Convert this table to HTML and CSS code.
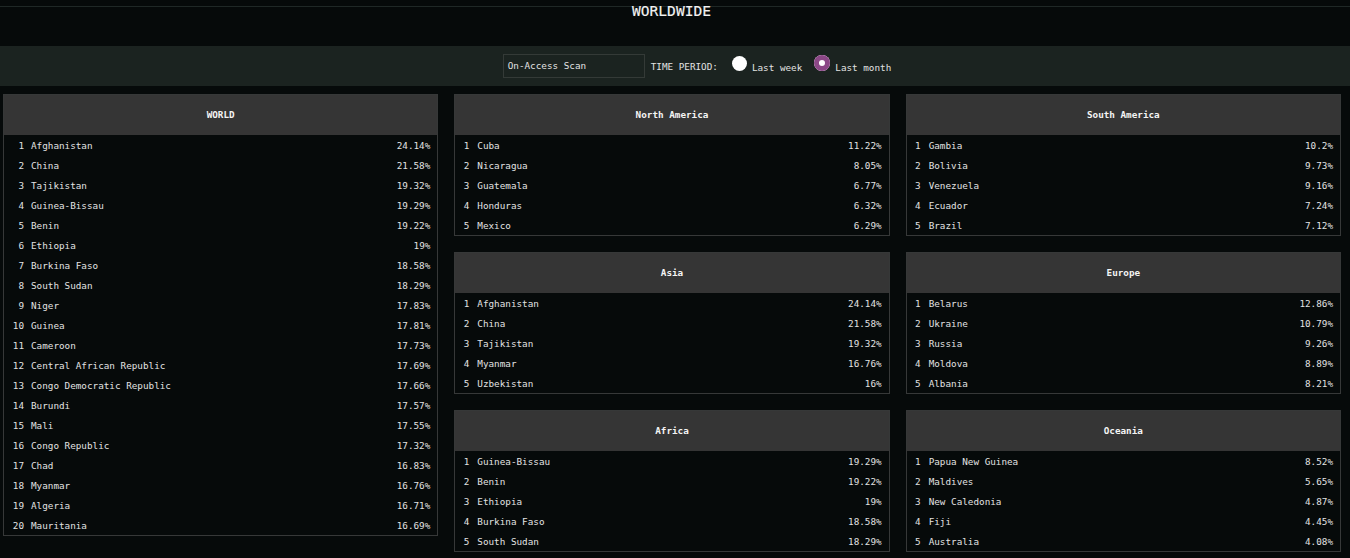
FILE: index.html
```html
<!DOCTYPE html>
<html lang="en">
<head>
  <meta charset="UTF-8" />
  <meta name="viewport" content="width=device-width, initial-scale=1.0" />
  <title>Worldwide</title>
  <link rel="stylesheet" href="styles.css">
</head>
<body>
  <header class="top">
    <div class="top-line">
      <h1 class="title">WORLDWIDE</h1>
    </div>
  </header>

  <div class="filters">
    <div class="scan-box">On-Access Scan</div>
    <span class="period-label">TIME PERIOD:</span>
    <label class="radio"><span class="dot"></span>Last week</label>
    <label class="radio"><span class="dot checked"></span>Last month</label>
  </div>

  <main class="board">
    <div class="column">
      <section class="card">
        <h3 class="card-title">WORLD</h3>
        <ol class="rank-list wide">
          <li><span class="num">1</span><span class="name">Afghanistan</span><span class="pct">24.14%</span></li>
          <li><span class="num">2</span><span class="name">China</span><span class="pct">21.58%</span></li>
          <li><span class="num">3</span><span class="name">Tajikistan</span><span class="pct">19.32%</span></li>
          <li><span class="num">4</span><span class="name">Guinea-Bissau</span><span class="pct">19.29%</span></li>
          <li><span class="num">5</span><span class="name">Benin</span><span class="pct">19.22%</span></li>
          <li><span class="num">6</span><span class="name">Ethiopia</span><span class="pct">19%</span></li>
          <li><span class="num">7</span><span class="name">Burkina Faso</span><span class="pct">18.58%</span></li>
          <li><span class="num">8</span><span class="name">South Sudan</span><span class="pct">18.29%</span></li>
          <li><span class="num">9</span><span class="name">Niger</span><span class="pct">17.83%</span></li>
          <li><span class="num">10</span><span class="name">Guinea</span><span class="pct">17.81%</span></li>
          <li><span class="num">11</span><span class="name">Cameroon</span><span class="pct">17.73%</span></li>
          <li><span class="num">12</span><span class="name">Central African Republic</span><span class="pct">17.69%</span></li>
          <li><span class="num">13</span><span class="name">Congo Democratic Republic</span><span class="pct">17.66%</span></li>
          <li><span class="num">14</span><span class="name">Burundi</span><span class="pct">17.57%</span></li>
          <li><span class="num">15</span><span class="name">Mali</span><span class="pct">17.55%</span></li>
          <li><span class="num">16</span><span class="name">Congo Republic</span><span class="pct">17.32%</span></li>
          <li><span class="num">17</span><span class="name">Chad</span><span class="pct">16.83%</span></li>
          <li><span class="num">18</span><span class="name">Myanmar</span><span class="pct">16.76%</span></li>
          <li><span class="num">19</span><span class="name">Algeria</span><span class="pct">16.71%</span></li>
          <li><span class="num">20</span><span class="name">Mauritania</span><span class="pct">16.69%</span></li>
        </ol>
      </section>
    </div>

    <div class="column">
      <section class="card">
        <h3 class="card-title">North America</h3>
        <ol class="rank-list">
          <li><span class="num">1</span><span class="name">Cuba</span><span class="pct">11.22%</span></li>
          <li><span class="num">2</span><span class="name">Nicaragua</span><span class="pct">8.05%</span></li>
          <li><span class="num">3</span><span class="name">Guatemala</span><span class="pct">6.77%</span></li>
          <li><span class="num">4</span><span class="name">Honduras</span><span class="pct">6.32%</span></li>
          <li><span class="num">5</span><span class="name">Mexico</span><span class="pct">6.29%</span></li>
        </ol>
      </section>
      <section class="card">
        <h3 class="card-title">Asia</h3>
        <ol class="rank-list">
          <li><span class="num">1</span><span class="name">Afghanistan</span><span class="pct">24.14%</span></li>
          <li><span class="num">2</span><span class="name">China</span><span class="pct">21.58%</span></li>
          <li><span class="num">3</span><span class="name">Tajikistan</span><span class="pct">19.32%</span></li>
          <li><span class="num">4</span><span class="name">Myanmar</span><span class="pct">16.76%</span></li>
          <li><span class="num">5</span><span class="name">Uzbekistan</span><span class="pct">16%</span></li>
        </ol>
      </section>
      <section class="card">
        <h3 class="card-title">Africa</h3>
        <ol class="rank-list">
          <li><span class="num">1</span><span class="name">Guinea-Bissau</span><span class="pct">19.29%</span></li>
          <li><span class="num">2</span><span class="name">Benin</span><span class="pct">19.22%</span></li>
          <li><span class="num">3</span><span class="name">Ethiopia</span><span class="pct">19%</span></li>
          <li><span class="num">4</span><span class="name">Burkina Faso</span><span class="pct">18.58%</span></li>
          <li><span class="num">5</span><span class="name">South Sudan</span><span class="pct">18.29%</span></li>
        </ol>
      </section>
    </div>

    <div class="column">
      <section class="card">
        <h3 class="card-title">South America</h3>
        <ol class="rank-list">
          <li><span class="num">1</span><span class="name">Gambia</span><span class="pct">10.2%</span></li>
          <li><span class="num">2</span><span class="name">Bolivia</span><span class="pct">9.73%</span></li>
          <li><span class="num">3</span><span class="name">Venezuela</span><span class="pct">9.16%</span></li>
          <li><span class="num">4</span><span class="name">Ecuador</span><span class="pct">7.24%</span></li>
          <li><span class="num">5</span><span class="name">Brazil</span><span class="pct">7.12%</span></li>
        </ol>
      </section>
      <section class="card">
        <h3 class="card-title">Europe</h3>
        <ol class="rank-list">
          <li><span class="num">1</span><span class="name">Belarus</span><span class="pct">12.86%</span></li>
          <li><span class="num">2</span><span class="name">Ukraine</span><span class="pct">10.79%</span></li>
          <li><span class="num">3</span><span class="name">Russia</span><span class="pct">9.26%</span></li>
          <li><span class="num">4</span><span class="name">Moldova</span><span class="pct">8.89%</span></li>
          <li><span class="num">5</span><span class="name">Albania</span><span class="pct">8.21%</span></li>
        </ol>
      </section>
      <section class="card">
        <h3 class="card-title">Oceania</h3>
        <ol class="rank-list">
          <li><span class="num">1</span><span class="name">Papua New Guinea</span><span class="pct">8.52%</span></li>
          <li><span class="num">2</span><span class="name">Maldives</span><span class="pct">5.65%</span></li>
          <li><span class="num">3</span><span class="name">New Caledonia</span><span class="pct">4.87%</span></li>
          <li><span class="num">4</span><span class="name">Fiji</span><span class="pct">4.45%</span></li>
          <li><span class="num">5</span><span class="name">Australia</span><span class="pct">4.08%</span></li>
        </ol>
      </section>
    </div>
  </main>
</body>
</html>
```

FILE: styles.css
```css
/* Base */
body {
  margin: 0;
  background-color: #060a0a;
  color: #e2e2e2;
  font-family: "DejaVu Sans Mono", "Liberation Mono", monospace;
  font-size: 9.3px;
}

/* Header */
.top {
  height: 46px;
  padding-top: 6px;
  box-sizing: border-box;
}

.top-line {
  border-top: 1px solid #1f2826;
  height: 39px;
  text-align: center;
}

.title {
  margin: -5px 0 0;
  padding-right: 7px;
  font-size: 14.6px;
  font-weight: normal;
  line-height: 17px;
  color: #f2f2f2;
  -webkit-text-stroke: 0.15px #f2f2f2;
}

/* Filters bar */
.filters {
  height: 40px;
  background-color: #1b2320;
  display: flex;
  align-items: center;
  justify-content: center;
  padding-left: 44px;
}

.scan-box {
  width: 142px;
  height: 24px;
  box-sizing: border-box;
  border: 1px solid #343a37;
  padding-left: 4px;
  line-height: 22px;
  margin-right: 6px;
}

.period-label {
  margin-right: 14px;
  line-height: 24px;
  padding-top: 2px;
}

.radio {
  display: flex;
  align-items: center;
  margin-right: 12px;
  padding-top: 2px;
}

.radio:last-child {
  margin-right: 0;
}

.dot {
  width: 15px;
  height: 15px;
  border-radius: 50%;
  background-color: #ffffff;
  margin-right: 5px;
  position: relative;
  top: -4px;
}

.dot.checked {
  width: 16px;
  height: 16px;
  background-color: #8b4786;
  box-shadow: inset 0 0 0 5px #8b4786, inset 0 0 0 8px #ffffff;
  margin-right: 5px;
}

/* Boards */
.board {
  display: grid;
  grid-template-columns: repeat(3, 1fr);
  column-gap: 16px;
  padding: 8px 9px 0 3px;
  align-items: start;
}

.column {
  display: flex;
  flex-direction: column;
  gap: 16px;
}

.card {
  border: 1px solid #363838;
  background-color: #060a0a;
}

.card-title {
  margin: 0;
  height: 40px;
  line-height: 40px;
  background-color: #353535;
  text-align: center;
  font-size: 9.3px;
  font-weight: bold;
  color: #f4f4f4;
}

.rank-list {
  list-style: none;
  margin: 0;
  padding: 0 7px 0 8px;
}

.rank-list li {
  display: flex;
  height: 20px;
  line-height: 22px;
}

.num {
  width: 6px;
  text-align: right;
  margin-right: 8px;
}

.wide .num {
  width: 12px;
  margin-right: 7px;
}

.name {
  flex: 1;
}

.pct {
  text-align: right;
}
```
